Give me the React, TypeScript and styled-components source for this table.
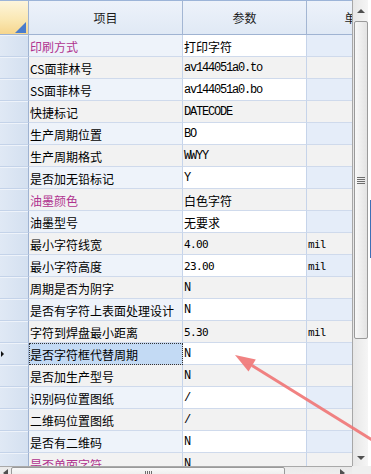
import React from "react";
import styled, { createGlobalStyle } from "styled-components";

type Kind = "cjk" | "mono" | "num";

interface ParamRow {
  item: string;
  value: string;
  kind: Kind;
  unit?: string;
  accent?: boolean;
}

const rows: ParamRow[] = [
  { item: "印刷方式", value: "打印字符", kind: "cjk", accent: true },
  { item: "CS面菲林号", value: "av144051a0.to", kind: "mono" },
  { item: "SS面菲林号", value: "av144051a0.bo", kind: "mono" },
  { item: "快捷标记", value: "DATECODE", kind: "mono" },
  { item: "生产周期位置", value: "BO", kind: "mono" },
  { item: "生产周期格式", value: "WWYY", kind: "mono" },
  { item: "是否加无铅标记", value: "Y", kind: "mono" },
  { item: "油墨颜色", value: "白色字符", kind: "cjk", accent: true },
  { item: "油墨型号", value: "无要求", kind: "cjk" },
  { item: "最小字符线宽", value: "4.00", kind: "num", unit: "mil" },
  { item: "最小字符高度", value: "23.00", kind: "num", unit: "mil" },
  { item: "周期是否为阴字", value: "N", kind: "mono" },
  { item: "是否有字符上表面处理设计", value: "N", kind: "mono" },
  { item: "字符到焊盘最小距离", value: "5.30", kind: "num", unit: "mil" },
  { item: "是否字符框代替周期", value: "N", kind: "mono" },
  { item: "是否加生产型号", value: "N", kind: "mono" },
  { item: "识别码位置图纸", value: "/", kind: "mono" },
  { item: "二维码位置图纸", value: "/", kind: "mono" },
  { item: "是否有二维码", value: "N", kind: "mono" },
  { item: "是否单面字符", value: "N", kind: "mono", accent: true },
];

const SELECTED = 14;

const GlobalStyle = createGlobalStyle`
  html, body {
    margin: 0;
    padding: 0;
    width: 371px;
    height: 474px;
    overflow: hidden;
    background: #ffffff;
  }
  body {
    font-family: "Noto Sans CJK SC", "Noto Sans", sans-serif;
    font-size: 12px;
  }
  * { box-sizing: border-box; }
`;

const Frame = styled.div`
  position: relative;
  width: 371px;
  height: 474px;
  overflow: hidden;
  display: flex;
  flex-direction: column;
  background: #ffffff;
`;

const TopArea = styled.div`
  display: flex;
  height: 466px;
  flex: none;
`;

const Viewport = styled.div`
  width: 352px;
  flex: none;
  overflow: hidden;
`;

const Grid = styled.div`
  display: grid;
  grid-template-columns: 29px 154px 124px 100px;
  grid-template-rows: 35px;
  grid-auto-rows: 22px;
  width: 407px;
`;

const CornerCell = styled.div`
  border-top: 1px solid #9cb4d8;
  border-right: 1px solid #9fb3d2;
  border-bottom: 1px solid #9fb3d2;
  background: linear-gradient(to bottom, #fdf5dc 0%, #fae8b4 55%, #f6d68e 100%);
  display: flex;
  align-items: flex-end;
  justify-content: flex-end;
  padding: 0 2px 1px 0;
`;

const CornerMark = styled.span`
  width: 0;
  height: 0;
  border-left: 11px solid transparent;
  border-bottom: 11px solid #4a7ccc;
`;

const HeadCell = styled.div`
  border-top: 1px solid #9cb4d8;
  border-right: 1px solid #a3b6d3;
  border-bottom: 1px solid #9fb3d2;
  background: linear-gradient(to bottom, #edf2fa, #e0e9f5);
  display: flex;
  align-items: center;
  justify-content: center;
  font-size: 12px;
  color: #1b1b1b;
  white-space: nowrap;
`;

const RowHead = styled.div`
  border-right: 1px solid #9fb3d2;
  border-bottom: 1px solid #c4d3e9;
  background: linear-gradient(to right, #e0e9f5, #d4e0f0);
  box-shadow: inset 0 1px 0 #eef3fa;
  display: flex;
  align-items: center;
  padding-left: 1px;
`;

const Pointer = styled.span`
  width: 0;
  height: 0;
  border-top: 3px solid transparent;
  border-bottom: 3px solid transparent;
  border-left: 3px solid #111111;
`;

const Cell = styled.div<{ $bg: string; $focus?: boolean }>`
  background: ${(p) => p.$bg};
  border-right: 1px solid #c6d4ea;
  border-bottom: 1px solid #cfdaec;
  display: flex;
  align-items: center;
  padding: 1px 0 0 1px;
  overflow: hidden;
  white-space: nowrap;
  outline: ${(p) => (p.$focus ? "1px dotted #333333" : "none")};
  outline-offset: -1px;
`;

const ItemText = styled.span<{ $accent?: boolean }>`
  font-family: "Noto Sans CJK SC", "Noto Sans", sans-serif;
  font-size: 12px;
  color: ${(p) => (p.$accent ? "#b0338f" : "#000000")};
`;

const ValueText = styled.span<{ $kind: Kind }>`
  color: #000000;
  font-family: ${(p) =>
    p.$kind === "cjk"
      ? '"Noto Sans CJK SC", "Noto Sans", sans-serif'
      : p.$kind === "num"
      ? '"DejaVu Sans Mono", monospace'
      : '"Liberation Mono", monospace'};
  font-size: ${(p) => (p.$kind === "num" ? "11px" : "12px")};
  letter-spacing: ${(p) =>
    p.$kind === "mono" ? "-1.2px" : p.$kind === "num" ? "-0.6px" : "0"};
`;

const VScroll = styled.div`
  width: 16px;
  flex: none;
  border-left: 1px solid #a7a7a7;
  background: linear-gradient(to right, #e7e7e7, #f5f5f5);
  display: flex;
  flex-direction: column;
  align-items: center;
`;

const ArrowBox = styled.div<{ $h: number }>`
  height: ${(p) => p.$h}px;
  width: 100%;
  flex: none;
  display: flex;
  align-items: center;
  justify-content: center;
`;

const TriUp = styled.span`
  width: 0;
  height: 0;
  border-left: 4px solid transparent;
  border-right: 4px solid transparent;
  border-bottom: 4px solid #505050;
`;

const TriDown = styled.span`
  width: 0;
  height: 0;
  border-left: 4px solid transparent;
  border-right: 4px solid transparent;
  border-top: 4px solid #505050;
`;

const TriLeft = styled.span`
  width: 0;
  height: 0;
  border-top: 4px solid transparent;
  border-bottom: 4px solid transparent;
  border-right: 5px solid #505050;
`;

const TriRight = styled.span`
  width: 0;
  height: 0;
  border-top: 4px solid transparent;
  border-bottom: 4px solid transparent;
  border-left: 5px solid #505050;
`;

const VThumb = styled.div`
  width: 14px;
  height: 318px;
  flex: none;
  border: 1px solid #9a9a9a;
  border-radius: 2px;
  background: linear-gradient(to right, #f8f8f8, #e3e3e3);
  display: flex;
  align-items: center;
  justify-content: center;
`;

const VGrip = styled.span`
  width: 8px;
  height: 7px;
  background: repeating-linear-gradient(
    to bottom,
    #6d6d6d 0 1px,
    transparent 1px 2px
  );
`;

const Track = styled.div`
  flex: 1;
`;

const RightStrip = styled.div`
  width: 3px;
  flex: none;
  background: #ffffff;
  display: flex;
  flex-direction: column;
  align-items: flex-end;
`;

const EdgeLine = styled.span`
  width: 1px;
  height: 58px;
  margin-top: 200px;
  background: #3d6fb6;
`;

const BottomArea = styled.div`
  display: flex;
  height: 17px;
  flex: none;
`;

const HScroll = styled.div`
  width: 352px;
  flex: none;
  border-top: 1px solid #a9a9a9;
  background: linear-gradient(to bottom, #e9e9e9, #f4f4f4);
  display: flex;
  align-items: flex-start;
  padding-right: 2px;
`;

const HArrow = styled.div<{ $w: number }>`
  width: ${(p) => p.$w}px;
  height: 10px;
  flex: none;
  display: flex;
  align-items: flex-end;
  justify-content: center;
  padding-top: 1px;
`;

const HThumb = styled.div`
  width: 274px;
  height: 15px;
  flex: none;
  border: 1px solid #9a9a9a;
  border-radius: 2px;
  background: linear-gradient(to bottom, #f8f8f8, #e4e4e4);
  display: flex;
  align-items: center;
  justify-content: center;
`;

const HGrip = styled.span`
  width: 7px;
  height: 7px;
  background: repeating-linear-gradient(
    to right,
    #6d6d6d 0 1px,
    transparent 1px 2px
  );
`;

const CornerBox = styled.div`
  flex: 1;
  background: #efefef;
`;

const Overlay = styled.svg`
  position: absolute;
  left: 0;
  top: 0;
  pointer-events: none;
`;

const colBg = (index: number, col: 1 | 2 | 3) => {
  if (index === SELECTED && col === 1) return "#c3daf4";
  if (index % 2 === 1) return "#f2f2f2";
  if (col === 1) return "#eef3fa";
  if (col === 2) return "#ffffff";
  return "#e5edf9";
};

const App: React.FC = () => {
  return (
    <Frame>
      <GlobalStyle />
      <TopArea>
        <Viewport>
          <Grid>
            <CornerCell>
              <CornerMark />
            </CornerCell>
            <HeadCell>项目</HeadCell>
            <HeadCell>参数</HeadCell>
            <HeadCell>单位</HeadCell>
            {rows.map((r, i) => (
              <React.Fragment key={r.item}>
                <RowHead>{i === SELECTED && <Pointer />}</RowHead>
                <Cell $bg={colBg(i, 1)} $focus={i === SELECTED}>
                  <ItemText $accent={r.accent}>{r.item}</ItemText>
                </Cell>
                <Cell $bg={colBg(i, 2)}>
                  <ValueText $kind={r.kind}>{r.value}</ValueText>
                </Cell>
                <Cell $bg={colBg(i, 3)}>
                  {r.unit && <ValueText $kind="num">{r.unit}</ValueText>}
                </Cell>
              </React.Fragment>
            ))}
          </Grid>
        </Viewport>
        <VScroll>
          <ArrowBox $h={21}>
            <TriUp />
          </ArrowBox>
          <VThumb>
            <VGrip />
          </VThumb>
          <Track />
          <ArrowBox $h={17}>
            <TriDown />
          </ArrowBox>
        </VScroll>
        <RightStrip>
          <EdgeLine />
        </RightStrip>
      </TopArea>
      <BottomArea>
        <HScroll>
          <HArrow $w={11}>
            <TriLeft />
          </HArrow>
          <HThumb>
            <HGrip />
          </HThumb>
          <Track />
          <HArrow $w={15}>
            <TriRight />
          </HArrow>
        </HScroll>
        <CornerBox />
      </BottomArea>
      <Overlay width={371} height={474} viewBox="0 0 371 474">
        <line
          x1={252}
          y1={365.5}
          x2={374}
          y2={441}
          stroke="#f07474"
          strokeWidth={3}
          strokeOpacity={0.9}
        />
        <polygon
          points="235,355 255.8,359.4 248.5,371.4"
          fill="#f07474"
          fillOpacity={0.9}
        />
      </Overlay>
    </Frame>
  );
};

export default App;
